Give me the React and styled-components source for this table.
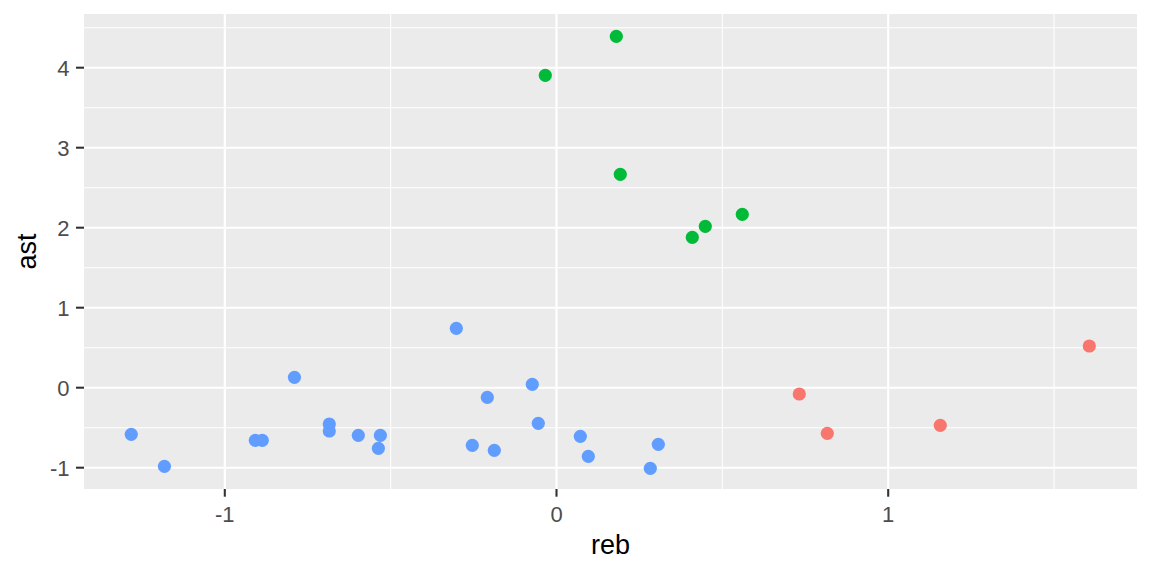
import React from 'react';
import styled, { createGlobalStyle } from 'styled-components';

const GlobalStyle = createGlobalStyle`
  html, body {
    margin: 0;
    padding: 0;
    background: #ffffff;
  }
  body {
    font-family: "Liberation Sans", Arial, sans-serif;
  }
`;

// panel geometry (page pixels)
const PANEL = { left: 84, top: 14, width: 1053, height: 475 };

// data -> panel pixels
const sx = v => 556.5 - PANEL.left + 331.7 * v;
const sy = v => 387.7 - PANEL.top - 80 * v;

const COLORS = {
  A: '#F8766D',
  B: '#00BA38',
  C: '#619CFF',
};

const points = [
  // group C
  { x: -1.282, y: -0.5825, g: 'C' },
  { x: -1.182, y: -0.9825, g: 'C' },
  { x: -0.908, y: -0.6575, g: 'C' },
  { x: -0.887, y: -0.6575, g: 'C' },
  { x: -0.79, y: 0.13, g: 'C' },
  { x: -0.685, y: -0.454, g: 'C' },
  { x: -0.685, y: -0.541, g: 'C' },
  { x: -0.5975, y: -0.595, g: 'C' },
  { x: -0.531, y: -0.595, g: 'C' },
  { x: -0.537, y: -0.7575, g: 'C' },
  { x: -0.302, y: 0.7425, g: 'C' },
  { x: -0.2086, y: -0.12, g: 'C' },
  { x: -0.073, y: 0.0425, g: 'C' },
  { x: -0.0549, y: -0.445, g: 'C' },
  { x: -0.2538, y: -0.72, g: 'C' },
  { x: -0.1875, y: -0.7825, g: 'C' },
  { x: 0.0718, y: -0.6075, g: 'C' },
  { x: 0.0959, y: -0.8575, g: 'C' },
  { x: 0.307, y: -0.7075, g: 'C' },
  { x: 0.2828, y: -1.0075, g: 'C' },
  // group B
  { x: 0.1803, y: 4.3925, g: 'B' },
  { x: -0.0338, y: 3.905, g: 'B' },
  { x: 0.1923, y: 2.6675, g: 'B' },
  { x: 0.5601, y: 2.1675, g: 'B' },
  { x: 0.4486, y: 2.0175, g: 'B' },
  { x: 0.4094, y: 1.88, g: 'B' },
  // group A
  { x: 0.732, y: -0.0788, g: 'A' },
  { x: 0.8164, y: -0.57, g: 'A' },
  { x: 1.157, y: -0.47, g: 'A' },
  { x: 1.6063, y: 0.5213, g: 'A' },
];

const xMajor = [-1, 0, 1];
const xMinor = [-0.5, 0.5, 1.5];
const yMajor = [-1, 0, 1, 2, 3, 4];
const yMinor = [-0.5, 0.5, 1.5, 2.5, 3.5, 4.5];

const Figure = styled.div`
  width: 1152px;
  height: 576px;
  display: grid;
  grid-template-columns: 48px 36px ${PANEL.width}px 15px;
  grid-template-rows: ${PANEL.top}px ${PANEL.height}px 36px 1fr;
  background: #ffffff;
`;

const YTitle = styled.div`
  grid-column: 1;
  grid-row: 2;
  display: flex;
  align-items: center;
  justify-content: center;
  padding-left: 6px;
`;

const XTitle = styled.div`
  grid-column: 3;
  grid-row: 4;
  display: flex;
  justify-content: center;
  padding-top: 7px;
`;

const TitleText = styled.span`
  font-size: 27px;
  line-height: 1;
  color: #000000;
  white-space: nowrap;
  transform: ${p => (p.$vertical ? 'rotate(-90deg)' : 'none')};
`;

const AxisSvg = styled.svg`
  grid-column: ${p => p.$col};
  grid-row: ${p => p.$row};
  display: block;
  overflow: visible;
  font-family: "Liberation Sans", Arial, sans-serif;
`;

const Panel = styled.svg`
  grid-column: 3;
  grid-row: 2;
  display: block;
  background: #ebebeb;
`;

const TickLabel = styled.text`
  font-size: 22px;
  fill: #4d4d4d;
`;

const YAxis = () => (
  <AxisSvg $col={2} $row={2} width={36} height={PANEL.height}>
    {yMajor.map(v => (
      <g key={v}>
        <line x1={28} x2={36} y1={sy(v)} y2={sy(v)} stroke="#333333" strokeWidth={2.1} />
        <TickLabel x={21.5} y={sy(v) + 7.9} textAnchor="end">
          {v}
        </TickLabel>
      </g>
    ))}
  </AxisSvg>
);

const XAxis = () => (
  <AxisSvg $col={3} $row={3} width={PANEL.width} height={36}>
    {xMajor.map(v => (
      <g key={v}>
        <line x1={sx(v)} x2={sx(v)} y1={0} y2={7.7} stroke="#333333" strokeWidth={2.1} />
        <TickLabel x={sx(v)} y={32.7} textAnchor="middle">
          {v}
        </TickLabel>
      </g>
    ))}
  </AxisSvg>
);

const PlotPanel = () => (
  <Panel width={PANEL.width} height={PANEL.height}>
    {yMinor.map(v => (
      <line key={'ym' + v} x1={0} x2={PANEL.width} y1={sy(v)} y2={sy(v)} stroke="#fff" strokeWidth={1.07} />
    ))}
    {xMinor.map(v => (
      <line key={'xm' + v} x1={sx(v)} x2={sx(v)} y1={0} y2={PANEL.height} stroke="#fff" strokeWidth={1.07} />
    ))}
    {yMajor.map(v => (
      <line key={'yM' + v} x1={0} x2={PANEL.width} y1={sy(v)} y2={sy(v)} stroke="#fff" strokeWidth={2.13} />
    ))}
    {xMajor.map(v => (
      <line key={'xM' + v} x1={sx(v)} x2={sx(v)} y1={0} y2={PANEL.height} stroke="#fff" strokeWidth={2.13} />
    ))}
    {points.map((p, i) => (
      <circle key={i} cx={sx(p.x)} cy={sy(p.y)} r={6.6} fill={COLORS[p.g]} />
    ))}
  </Panel>
);

const App = () => (
  <>
    <GlobalStyle />
    <Figure>
      <YTitle>
        <TitleText $vertical>ast</TitleText>
      </YTitle>
      <YAxis />
      <PlotPanel />
      <XAxis />
      <XTitle>
        <TitleText>reb</TitleText>
      </XTitle>
    </Figure>
  </>
);

export default App;
